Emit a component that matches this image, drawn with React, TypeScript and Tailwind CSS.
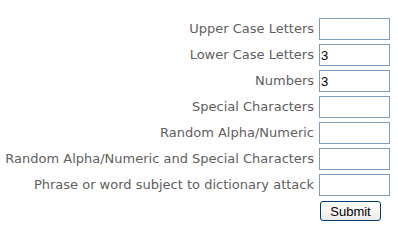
import React from "react";

const rows: [string, string][] = [
  ["Upper Case Letters", ""],
  ["Lower Case Letters", "3"],
  ["Numbers", "3"],
  ["Special Characters", ""],
  ["Random Alpha/Numeric", ""],
  ["Random Alpha/Numeric and Special Characters", ""],
  ["Phrase or word subject to dictionary attack", ""],
];

export default function App() {
  return (
    <div className="w-[398px] h-[234px] bg-white flex justify-end pr-[8px] pt-[18px]">
      <div className="flex flex-col gap-[4px]">
        {rows.map(([label, val]) => (
          <div key={label} className="flex items-center justify-end gap-[5px] h-[22px]">
            <span className="text-[13px] text-[#606060] whitespace-nowrap" style={{ fontFamily: '"DejaVu Sans", Verdana, sans-serif' }}>
              {label}
            </span>
            <input
              defaultValue={val}
              className="w-[71px] h-[22px] border border-[#7f9db9] px-[1px] text-[13px] text-black outline-none"
              style={{ fontFamily: '"Liberation Sans", Arial, sans-serif' }}
            />
          </div>
        ))}
        <div className="flex justify-end pr-[9px] mt-[1px]">
          <button
            className="w-[61px] h-[20px] border border-[#003c74] rounded-[3px] bg-gradient-to-b from-white to-[#ecebe6] text-[13px] text-black leading-none"
            style={{ fontFamily: '"Liberation Sans", Arial, sans-serif' }}
          >
            Submit
          </button>
        </div>
      </div>
    </div>
  );
}
